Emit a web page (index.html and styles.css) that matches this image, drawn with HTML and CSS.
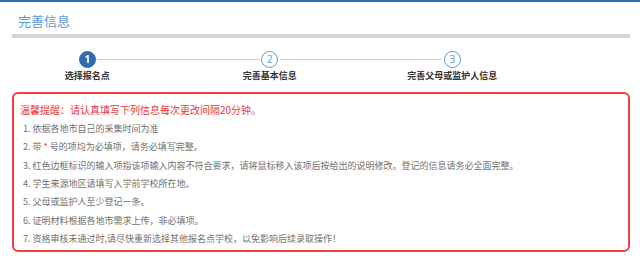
FILE: index.html
```html
<!DOCTYPE html>
<html lang="zh-CN">
<head>
  <meta charset="UTF-8">
  <meta name="viewport" content="width=device-width, initial-scale=1.0">
  <title>完善信息</title>
  <link rel="stylesheet" href="styles.css">
</head>
<body>
  <div class="topbar"></div>
  <div class="page">
    <h1 class="page-title">完善信息</h1>
    <div class="divider"></div>

    <div class="steps">
      <div class="step active">
        <div class="step-num">1</div>
        <div class="step-label">选择报名点</div>
      </div>
      <div class="step">
        <div class="step-num">2</div>
        <div class="step-label">完善基本信息</div>
      </div>
      <div class="step">
        <div class="step-num">3</div>
        <div class="step-label">完善父母或监护人信息</div>
      </div>
    </div>

    <div class="notice">
      <div class="notice-title">温馨提醒：请认真填写下列信息每次更改间隔20分钟。</div>
      <ul class="notice-list">
        <li>1. 依据各地市自己的采集时间为准</li>
        <li>2. 带 <span class="star">*</span> 号的项均为必填项，请务必填写完整。</li>
        <li>3. 红色边框标识的输入项指该项输入内容不符合要求，请将鼠标移入该项后按给出的说明修改。登记的信息请务必全面完整。</li>
        <li>4. 学生来源地区请填写入学前学校所在地。</li>
        <li>5. 父母或监护人至少登记一条。</li>
        <li>6. 证明材料根据各地市需求上传，非必填项。</li>
        <li>7. 资格审核未通过时,请尽快重新选择其他报名点学校，以免影响后续录取操作！</li>
      </ul>
    </div>
  </div>
</body>
</html>
```

FILE: styles.css
```css
body {
  margin: 0;
  font-family: "Microsoft YaHei", "Noto Sans CJK SC", sans-serif;
  background-color: #fff;
  color: #333;
}

.topbar {
  height: 2px;
  background-color: #2d6cb4;
}

.page {
  padding: 0 10px 0 12px;
}

.page-title {
  margin: 0;
  padding: 7px 0 0 6px;
  height: 25px;
  font-size: 13px;
  line-height: 24px;
  font-weight: normal;
  color: #5a97d6;
}

.divider {
  height: 4px;
  background-color: #d4d4d4;
}

.steps {
  display: flex;
  margin-left: -16px;
  padding-top: 13px;
}

.step {
  position: relative;
  width: 182.5px;
  display: flex;
  flex-direction: column;
  align-items: center;
}

.step:not(:last-child)::after {
  content: "";
  position: absolute;
  top: 8px;
  left: calc(50% + 10px);
  width: calc(100% - 20px);
  height: 1px;
  background-color: #d0d0d0;
}

.step-num {
  width: 15px;
  height: 15px;
  border: 1px solid #5a97d6;
  border-radius: 50%;
  font-family: "Open Sans", Arial, sans-serif;
  font-size: 10px;
  line-height: 15px;
  text-align: center;
  color: #5a97d6;
  background-color: #fff;
}

.step.active .step-num {
  background-color: #2e6bb3;
  border-color: #2e6bb3;
  color: #fff;
  font-weight: bold;
}

.step-label {
  margin-top: 2px;
  font-size: 9px;
  line-height: 12px;
  font-weight: bold;
  color: #333;
  white-space: nowrap;
}

.notice {
  margin-top: 10px;
  border: 2px solid #f43f3f;
  border-radius: 6px;
  padding: 6px 6px 2px 6px;
}

.notice-title {
  font-size: 10px;
  line-height: 20px;
  color: #e8383d;
}

.notice-list {
  list-style: none;
  margin: 0;
  padding: 0 0 0 3px;
}

.notice-list li {
  font-size: 9px;
  line-height: 18.33px;
  color: #707070;
  white-space: nowrap;
}

.star {
  color: #f33;
}
```
